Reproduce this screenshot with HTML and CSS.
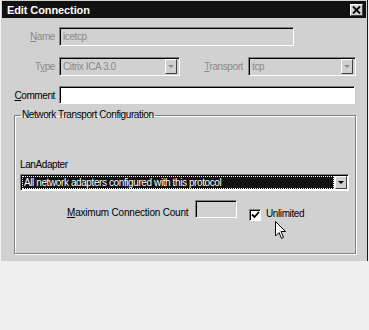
FILE: index.html
```html
<!DOCTYPE html>
<html lang="en">
<head>
    <meta charset="UTF-8">
    <title>Edit Connection</title>
    <link rel="stylesheet" href="styles.css">
</head>
<body>
    <div class="window">
        <div class="titlebar">
            <span class="title">Edit Connection</span>
            <span class="close">
                <svg width="9" height="8" viewBox="0 0 9 8"><path d="M1 0.5 L8 7.5 M8 0.5 L1 7.5" stroke="#000" stroke-width="1.8"/></svg>
            </span>
        </div>

        <div class="row row-name">
            <label class="label disabled"><u>N</u>ame</label>
            <div class="field field-name disabled-field">icetcp</div>
        </div>

        <div class="row row-type">
            <label class="label disabled">T<u>y</u>pe</label>
            <div class="field select select-type disabled-field">
                <span class="value">Citrix ICA 3.0</span>
                <span class="drop"><span class="arrow gray"></span></span>
            </div>
            <label class="label label-transport disabled"><u>T</u>ransport</label>
            <div class="field select select-transport disabled-field">
                <span class="value">tcp</span>
                <span class="drop"><span class="arrow gray"></span></span>
            </div>
        </div>

        <div class="row row-comment">
            <label class="label"><u>C</u>omment</label>
            <div class="field field-comment"></div>
        </div>

        <fieldset class="group">
            <legend>Network Transport Configuration</legend>

            <div class="lan-label">LanAdapter</div>
            <div class="field select select-lan">
                <span class="value"><span class="focus">All network adapters configured with this protocol</span></span>
                <span class="drop"><span class="arrow"></span></span>
            </div>

            <div class="count-row">
                <label class="count-label"><u>M</u>aximum Connection Count</label>
                <div class="field field-count disabled-field"></div>
                <span class="checkbox">
                    <svg width="9" height="8" viewBox="0 0 9 8"><path d="M1 3.5 L3.5 6 L8 1" fill="none" stroke="#000" stroke-width="1.8"/></svg>
                </span>
                <span class="check-text">Unlimited</span>
            </div>
        </fieldset>

        <svg class="cursor" width="12" height="20" viewBox="0 0 12 20">
            <path d="M0.5 0.5 L0.5 15 L4 11.5 L6.5 17.5 L8.5 16.5 L6 10.5 L10.5 10.5 Z" fill="#fff" stroke="#000" stroke-width="1"/>
        </svg>
    </div>
</body>
</html>
```

FILE: styles.css
```css
body {
    margin: 0;
    background-color: #efefef;
    font-family: "Liberation Sans", Arial, sans-serif;
    font-size: 10px;
    letter-spacing: -0.4px;
    color: #000;
}

.window {
    position: relative;
    width: 366px;
    height: 261px;
    background-color: #d1d1d1;
    border-right: 1px solid #1a1a1a;
    border-left: 1px solid #f4f4f4;
    box-sizing: content-box;
    overflow: hidden;
}

.titlebar {
    display: flex;
    align-items: center;
    justify-content: space-between;
    height: 17px;
    margin: 1px 1px 0 1px;
    padding: 0 3px 0 5px;
    background-color: #111;
}

.title {
    color: #fff;
    font-weight: bold;
    font-size: 11px;
    letter-spacing: -0.1px;
}

.close {
    display: flex;
    align-items: center;
    justify-content: center;
    width: 11px;
    height: 10px;
    background-color: #d1d1d1;
    border: 1px solid;
    border-color: #fff #404040 #404040 #fff;
}

.row {
    display: flex;
    align-items: center;
    height: 19px;
}

.row-name {
    margin-top: 9px;
}

.row-type {
    margin-top: 11px;
}

.row-comment {
    margin-top: 10px;
    height: 18px;
}

.label {
    width: 54px;
    margin-right: 4px;
    text-align: right;
}

.disabled {
    color: #8a8a8a;
}

.field {
    box-sizing: border-box;
    height: 100%;
    border: 1px solid;
    border-color: #808080 #fff #fff #808080;
    box-shadow: inset 1px 1px 0 #000;
    background-color: #fff;
    display: flex;
    align-items: center;
    padding-left: 3px;
}

.disabled-field {
    background-color: #d1d1d1;
    color: #8a8a8a;
}

.field-name {
    width: 235px;
}

.field-comment {
    width: 296px;
}

.select {
    padding: 0 2px 0 3px;
    justify-content: space-between;
}

.select-type {
    width: 121px;
}

.label-transport {
    width: 63px;
    margin-right: 5px;
}

.select-transport {
    width: 108px;
}

.drop {
    box-sizing: border-box;
    width: 12px;
    height: 15px;
    background-color: #d1d1d1;
    border: 1px solid;
    border-color: #fff #404040 #404040 #fff;
    display: flex;
    align-items: center;
    justify-content: center;
}

.arrow {
    width: 0;
    height: 0;
    border-left: 3px solid transparent;
    border-right: 3px solid transparent;
    border-top: 3px solid #000;
}

.arrow.gray {
    border-top-color: #8a8a8a;
}

.group {
    position: relative;
    box-sizing: border-box;
    width: 342px;
    height: 145px;
    margin: 5px 0 0 13px;
    padding: 0 5px;
    border: 1px solid #808080;
    box-shadow: 1px 1px 0 #fff, inset 1px 1px 0 #fff;
}

.group legend {
    padding: 0 1px;
    margin-left: 1px;
    line-height: 12px;
}

.lan-label {
    margin-top: 38px;
    line-height: 12px;
}

.select-lan {
    width: 329px;
    height: 17px;
    margin: 3px 0 0 0;
    padding: 1px;
    background-color: #fff;
}

.select-lan .value {
    flex: 1;
    height: 100%;
    background-color: #111;
    color: #fff;
    display: flex;
}

.focus {
    flex: 1;
    border: 1px dotted #fff;
    padding-left: 1px;
    line-height: 11px;
}

.select-lan .drop {
    height: 13px;
    margin-left: 1px;
}

.count-row {
    display: flex;
    align-items: center;
    height: 18px;
    margin-top: 9px;
}

.count-label {
    margin: 6px 0 0 47px;
    width: 128px;
    letter-spacing: -0.2px;
}

.field-count {
    width: 42px;
}

.checkbox {
    box-sizing: border-box;
    width: 12px;
    height: 12px;
    margin: 11px 0 0 12px;
    background-color: #fff;
    border: 1px solid;
    border-color: #808080 #fff #fff #808080;
    box-shadow: inset 1px 1px 0 #000;
    display: flex;
    align-items: center;
    justify-content: center;
}

.check-text {
    margin: 9px 0 0 5px;
}

.cursor {
    position: absolute;
    left: 274px;
    top: 221px;
}
```
